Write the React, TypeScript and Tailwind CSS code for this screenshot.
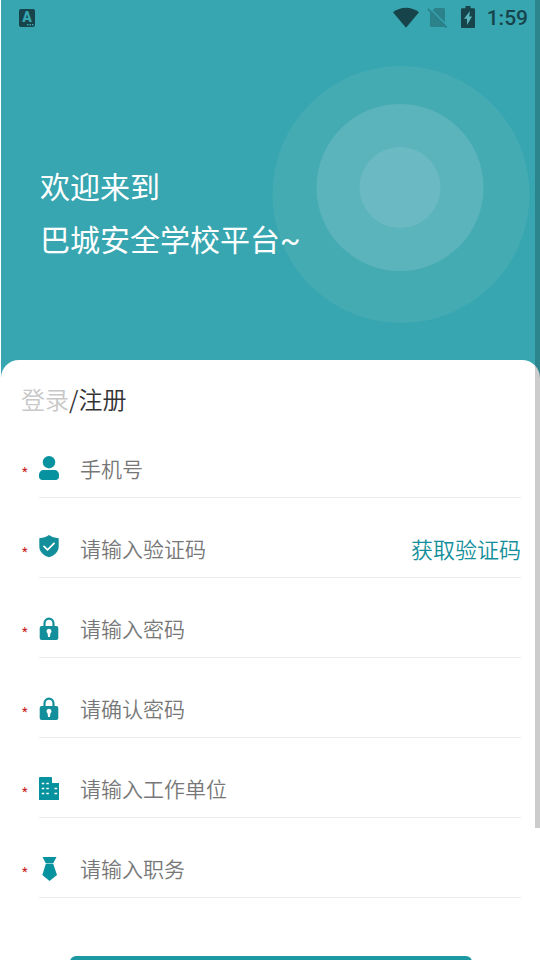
import type { ReactNode } from 'react';

const UserIcon = () => (
  <svg width="20" height="24" viewBox="0 0 20 24" fill="#06929e">
    <circle cx="10" cy="6.2" r="6.2" />
    <path d="M5 14h10c3 0 5 2 5 5v1.500c0 2.200-1.300 3.500-3.500 3.500h-13C1.300 24 0 22.700 0 20.500V19c0-3 2-5 5-5z" />
  </svg>
);

const ShieldIcon = () => (
  <svg width="20" height="26" viewBox="0 0 20 26" fill="none">
    <path
      d="M10 0c2.600 1.900 5.800 2.900 9.700 3.200v8.300c0 5.200-4.200 9.300-9.700 10.800C4.500 20.800.3 16.700.3 11.500V3.200C4.200 2.900 7.400 1.900 10 0z"
      fill="#138f9b"
    />
    <path d="M4.500 10.800l4 4 7-7" stroke="#fff" strokeWidth="1.800" />
  </svg>
);

const LockIcon = () => (
  <svg width="20" height="26" viewBox="0 -2 20 26" fill="none">
    <path d="M5.500 11V6.500a4.500 4.800 0 0 1 9 0V11" stroke="#138f9b" strokeWidth="2.200" />
    <rect x="0.700" y="9" width="18.600" height="14" rx="2" fill="#138f9b" />
    <path
      d="M10 11.800a2.500 2.500 0 0 1 1.500 4.500l-.6 3.700H9.100l-.6-3.700a2.500 2.500 0 0 1 1.500-4.500z"
      fill="#fff"
    />
  </svg>
);

const BuildingIcon = () => (
  <svg width="20" height="26" viewBox="0 -2 20 26">
    <path d="M0 1Q0 0 1 0h11q1 0 1 1V6h7v17H0z" fill="#06929e" />
    <path
      d="M2.800 6.500h2.500M7.300 6.500h2.500M2.800 11.500h2.500M7.300 11.500h2.500M15.500 11.500h2.700M2.800 16.500h2.500M7.300 16.500h2.500M15.500 16.500h2.700"
      stroke="#fff"
      strokeWidth="1.300"
    />
  </svg>
);

const TieIcon = () => (
  <svg width="20" height="26" viewBox="0 -2 20 26" fill="#06929e">
    <path d="M3.500 0h14l-3.300 6.200H6.800z" />
    <path d="M6.800 6.800h7.400L18 18l-7.500 6-7.200-6z" />
  </svg>
);

const StatusBar = () => (
  <div className="flex h-9 items-center justify-between pr-3 pl-[18px] text-[#17444a]">
    <div className="flex h-[18px] w-4 flex-col items-center rounded-xs bg-[#17444a] text-[#37a6b1]">
      <span className="text-[14px] leading-4 font-black">A</span>
      <svg className="-mt-px self-end" width="8" height="2" fill="currentColor">
        <path d="M0 0h1.500v1.500H0zM2.500 0h1.500v1.500H2.500zM5 0h1.500v1.500H5z" />
      </svg>
    </div>
    <div className="flex items-center">
      <svg width="26" height="24" viewBox="0 0 26 24" fill="currentColor">
        <path d="M0 6.200C7.500.2 18.500.2 26 6.200L13 21.800z" />
      </svg>
      <svg className="ml-2" width="21" height="24" viewBox="0 0 21 24">
        <path
          d="M8 2h8.500q1.500 0 1.500 1.500v16q0 1.500-1.500 1.500h-12Q3 21 3 19.500V7z"
          fill="#2b828b"
        />
        <path d="M2.200 1.800L20.700 20.300" stroke="#37a6b1" strokeWidth="1.400" />
        <path d="M1 3L19.500 21.500" stroke="#2b828b" strokeWidth="1.800" />
      </svg>
      <svg className="ml-[13px]" width="14" height="24" viewBox="0 0 14 24">
        <path
          d="M4.500 0h5v2.200H13q1 0 1 1V21q0 1-1 1H1q-1 0-1-1V3.200q0-1 1-1h3.500z"
          fill="currentColor"
        />
        <path d="M9 5L3 12.800h3V19l5-8.500H8.200z" fill="#5bb3bc" />
      </svg>
      <span className="ml-3 text-[21px] leading-6 font-medium">1:59</span>
    </div>
  </div>
);

type FieldProps = {
  id: string;
  icon: ReactNode;
  placeholder: string;
  type?: string;
  children?: ReactNode;
};

const Field = ({ id, icon, placeholder, type = 'text', children }: FieldProps) => (
  <div className="flex">
    <span className="w-[17px] shrink-0 pt-11 font-['Roboto',sans-serif] text-[13px] leading-5 text-[#c81010]">
      *
    </span>
    <div className="flex min-w-0 flex-1 items-center border-b border-[#ececec] pt-[33px] pb-[13px]">
      <label htmlFor={id} aria-label={placeholder} className="shrink-0">
        {icon}
      </label>
      <input
        id={id}
        type={type}
        placeholder={placeholder}
        className="ml-[21px] h-[33px] min-w-0 flex-1 text-[21px] font-[350] text-[#333] outline-none placeholder:text-[#777]"
      />
      {children}
    </div>
  </div>
);

const App = () => {
  return (
    <div className="relative h-screen overflow-hidden border-l border-white bg-white font-['Roboto','Noto_Sans_CJK_SC',sans-serif]">
      <header className="relative bg-[#37a6b1] pb-[113px]">
        <svg
          className="absolute top-[66px] right-[10px]"
          width="258"
          height="258"
          viewBox="0 0 258 258"
        >
          <circle cx="129" cy="128.500" r="128.500" fill="#45abb3" />
          <circle cx="128" cy="121.500" r="83.500" fill="#5bb3bc" />
          <circle cx="128" cy="121.500" r="40.500" fill="#6bbac3" />
        </svg>
        <StatusBar />
        <h1 className="relative mt-[125px] pl-[39px] text-[30px] leading-[53px] font-normal text-white">
          欢迎来到
          <br />
          巴城安全学校平台~
        </h1>
      </header>

      <main className="relative -mt-5 rounded-t-[18px] bg-white pt-5 pr-[19px] pl-5 font-['Noto_Sans_CJK_SC',sans-serif]">
        <div className="flex text-[24px] leading-[38px] font-[350] text-[#333]">
          <button type="button" className="text-[#c8c8c8]">
            登录
          </button>
          <span>/</span>
          <button type="button">注册</button>
        </div>

        <form className="pl-px">
          <Field id="phone" type="tel" icon={<UserIcon />} placeholder="手机号" />
          <Field id="code" icon={<ShieldIcon />} placeholder="请输入验证码">
            <button type="button" className="text-[22px] leading-8 font-[350] text-[#138f9b]">
              获取验证码
            </button>
          </Field>
          <Field id="password" type="password" icon={<LockIcon />} placeholder="请输入密码" />
          <Field id="confirm" type="password" icon={<LockIcon />} placeholder="请确认密码" />
          <Field id="company" icon={<BuildingIcon />} placeholder="请输入工作单位" />
          <Field id="job" icon={<TieIcon />} placeholder="请输入职务" />
          <button
            type="submit"
            aria-label="注册"
            className="mt-[58px] mr-[49px] ml-12 block h-12 w-[calc(100%-97px)] rounded-md bg-[#1c98a3]"
          />
        </form>
      </main>

      <div className="absolute top-0 right-0 h-[86.25%] w-[5px] bg-black/20" />
    </div>
  );
};

export default App;
